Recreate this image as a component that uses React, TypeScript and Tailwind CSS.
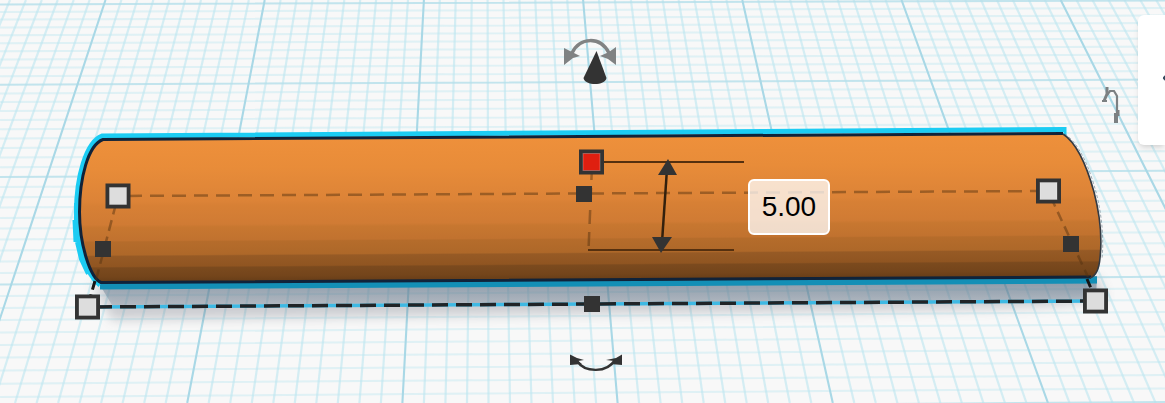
import { useState } from "react";
import type { ReactNode } from "react";

const HORIZON = -1145;

function rowY(row: number) {
  return HORIZON + 1 / (0.00087 - 0.00000568 * row);
}

/** Perspective workplane: ten fine divisions for every heavy line. */
function Workplane() {
  const fine: string[] = [];
  const rows: string[] = [];
  const heavy: string[] = [];
  const heavyRows: string[] = [];
  for (let i = -30; i <= 110; i++) {
    const d = `M${(105.5 + 15.92 * i).toFixed(1)} 0L${(-28 + 21.52 * i).toFixed(1)} 403`;
    (i % 10 === 0 ? heavy : fine).push(d);
  }
  for (let r = -1; r <= 42; r++) {
    const y = rowY(r);
    const d = `M0 ${y.toFixed(1)}L1165 ${(y - 4 - r * 0.12).toFixed(1)}`;
    (r % 10 === 0 ? heavyRows : rows).push(d);
  }
  return (
    <g fill="none">
      <rect width="1165" height="403" fill="#f8f8f8" />
      <path d={rows.join("")} stroke="#c6e9f2" strokeWidth="2" opacity="0.5" />
      <path d={fine.join("")} stroke="#bde6f0" strokeWidth="2.200" opacity="0.6" />
      <path d={heavyRows.join("")} stroke="#b4dfea" strokeWidth="2" opacity="0.8" />
      <path d={heavy.join("")} stroke="#a9d8e6" strokeWidth="2.100" />
    </g>
  );
}

function CornerHandle({ x, y, fill = "#dddddd" }: { x: number; y: number; fill?: string }) {
  return (
    <g>
      <rect x={x - 12.5} y={y - 12.5} width="25" height="25" fill="#333333" />
      <rect x={x - 8.5} y={y - 8.5} width="17" height="17" fill={fill} stroke="#ffffff" strokeOpacity="0.25" />
    </g>
  );
}

function EdgeHandle({ x, y }: { x: number; y: number }) {
  return <rect x={x - 8} y={y - 8} width="16" height="16" fill="#333333" />;
}

const BODY =
  "M103 139L1063 134C1080 145 1089 174 1094 192C1100 215 1102 240 1100 258C1099 270 1096 277 1090 278L101 283C90 276 79 243 79 213C79 177 88 145 103 139Z";

function Cylinder() {
  return (
    <g>
      <path d="M92 284L1097 277L1106 298C1060 312 900 310 590 314L112 320Z" fill="#4d5363" opacity="0.26" filter="url(#soft)" />
      <path d="M98 282L1097 276L1096 300L112 305Z" fill="url(#contact)" />
      <path d="M100 286L1097 280" stroke="#138fb6" strokeWidth="7" />
      <path d="M1065 129.500L102 136C86 142 76.500 178 76.500 212C76.500 244 86 274 100 285" fill="none" stroke="#1cccf3" strokeWidth="5" />
      <path d="M76 203V226M74.500 220L75.500 242M77 242L81 259L88 274" fill="none" stroke="#1cccf3" strokeWidth="4" />
      <path d="M1065 127V136" stroke="#1cccf3" strokeWidth="3" />
      <path d={BODY} fill="url(#barrel)" />
      <path d="M1063 133.500L103 139.500C88 145 79.500 178 79.500 212C79.500 244 90 278 101 282.500L1091 277" fill="none" stroke="#10233a" strokeWidth="3" strokeLinejoin="round" />
      <path d="M1063 134C1080 145 1089 174 1094 192C1100 215 1102 240 1100 258C1099 270 1096 276 1090 278" fill="none" stroke="#333a43" strokeWidth="1.6" />
      <path d="M1065 134C1082 146 1091 174 1096 192C1102 215 1104 240 1102 258" fill="none" stroke="#738491" strokeWidth="0.7" strokeDasharray="3 2" />
    </g>
  );
}

function Guides() {
  return (
    <g fill="none">
      <g stroke="#51300f" strokeOpacity="0.46" strokeWidth="2.500">
        <path d="M118 196L1048 191" strokeDasharray="14 8" strokeDashoffset="12" />
        <path d="M118 196L96 280" strokeDasharray="11 6" strokeDashoffset="9" />
        <path d="M1048 191L1088 277" strokeDasharray="10 6" strokeDashoffset="9" />
        <path d="M592 166L588.500 250" strokeDasharray="14 8" strokeDashoffset="0" />
      </g>
      <path d="M95 281L90 298M1087 279L1093 293" stroke="#151515" strokeWidth="3" strokeDasharray="9 5" />
      <path d="M88 307L1095 301" stroke="#3fb9e3" strokeWidth="3.500" />
      <path d="M88 307L1095 301" stroke="#202427" strokeWidth="3.500" strokeDasharray="16 8" strokeDashoffset="16" />
      <path d="M602 162H744M588 250H734" stroke="#55300f" strokeWidth="2" />
      <path d="M667 169L662 242" stroke="#33200d" strokeWidth="2.500" />
      <path d="M668 159L658 175H677ZM661 253L652 237H672Z" fill="#333333" />
    </g>
  );
}

function RotateHandles() {
  return (
    <g>
      <g fill="#808283" stroke="none">
        <path d="M572 53C580 37 600 36 609 53" fill="none" stroke="#808283" strokeWidth="3.500" />
        <path d="M564 48L572 52L580 56L573 58L564 65ZM616 47L609 52L600 56L608 59L616 65Z" />
      </g>
      <path d="M596.500 51L606.500 78C605 86 585 86 583.500 78Z" fill="#333333" />
      <path d="M577 361C585 373 607 373 615 360" fill="none" stroke="#333333" strokeWidth="2.400" />
      <path d="M570 354.500L577 358L584 360L578 361L582 364L570 365ZM622 354.500L616 358L606 360L614 361L610 364L622 365Z" fill="#333333" />
      <g fill="none" stroke="#7c8082">
        <path d="M1107 95L1110 91L1114 91L1117 96L1117 116" strokeWidth="2.200" />
        <path d="M1107 87V94L1104 101" strokeWidth="3" />
        <path d="M1102 101H1107" strokeWidth="2" />
        <path d="M1118 110V116" strokeWidth="3" />
        <path d="M1116 113V123" strokeWidth="4" />
      </g>
    </g>
  );
}

function Defs(): ReactNode {
  return (
    <defs>
      <filter id="soft" x="-10%" y="-50%" width="120%" height="220%">
        <feGaussianBlur stdDeviation="6" />
      </filter>
      <linearGradient id="contact" x1="0" y1="280" x2="0" y2="306" gradientUnits="userSpaceOnUse">
        <stop offset="0" stopColor="#536f87" stopOpacity="0.58" />
        <stop offset="1" stopColor="#788b9c" stopOpacity="0.3" />
      </linearGradient>
      <linearGradient id="barrel" x1="580" y1="137" x2="580.860" y2="281" gradientUnits="userSpaceOnUse">
        <stop offset="0" stopColor="#ee903b" />
        <stop offset="0.2" stopColor="#e88c39" />
        <stop offset="0.43" stopColor="#dc8337" />
        <stop offset="0.46" stopColor="#d78035" />
        <stop offset="0.59" stopColor="#d07b34" />
        <stop offset="0.61" stopColor="#c77730" />
        <stop offset="0.7" stopColor="#c1722f" />
        <stop offset="0.71" stopColor="#b56c2b" />
        <stop offset="0.8" stopColor="#ae6829" />
        <stop offset="0.81" stopColor="#965a25" />
        <stop offset="0.88" stopColor="#905521" />
        <stop offset="0.89" stopColor="#7b4a1e" />
        <stop offset="0.95" stopColor="#74451b" />
        <stop offset="1" stopColor="#633b17" />
      </linearGradient>
    </defs>
  );
}

export default function App() {
  const [height, setHeight] = useState("5.00");
  return (
    <main className="relative w-full overflow-hidden bg-[#f8f8f8] font-['Liberation_Sans',sans-serif]">
      <svg viewBox="0 0 1165 403" className="block h-auto w-full" aria-hidden="true">
        <Defs />
        <Workplane />
        <Cylinder />
        <Guides />
        <CornerHandle x={118} y={196} />
        <CornerHandle x={1048.5} y={191} />
        <CornerHandle x={87.5} y={307} />
        <CornerHandle x={1095.5} y={301} />
        <CornerHandle x={591.5} y={162} fill="#df1f10" />
        <EdgeHandle x={584} y={194} />
        <EdgeHandle x={103} y={249} />
        <EdgeHandle x={1071} y={244} />
        <EdgeHandle x={592} y={304} />
        <RotateHandles />
      </svg>
      <input
        aria-label="Height"
        value={height}
        onChange={(event) => setHeight(event.target.value)}
        className="absolute left-[64.2%] top-[44.4%] h-14 w-[82px] rounded-md border-2 border-white bg-white/75 p-0 text-center text-[28px] leading-8 text-black outline-none"
      />
      <aside className="absolute right-0 top-[15px] flex h-[130px] w-[27px] items-center overflow-hidden rounded-l-md bg-white shadow-md">
        <button type="button" aria-label="Expand panel" className="ml-6 flex shrink-0 items-center">
          <svg viewBox="0 0 12 20" className="h-5 w-3" fill="none" stroke="#34495e" strokeWidth="4" strokeLinecap="round" strokeLinejoin="round" aria-hidden="true">
            <path d="M11 1L3 8L11 15" />
          </svg>
        </button>
      </aside>
    </main>
  );
}
